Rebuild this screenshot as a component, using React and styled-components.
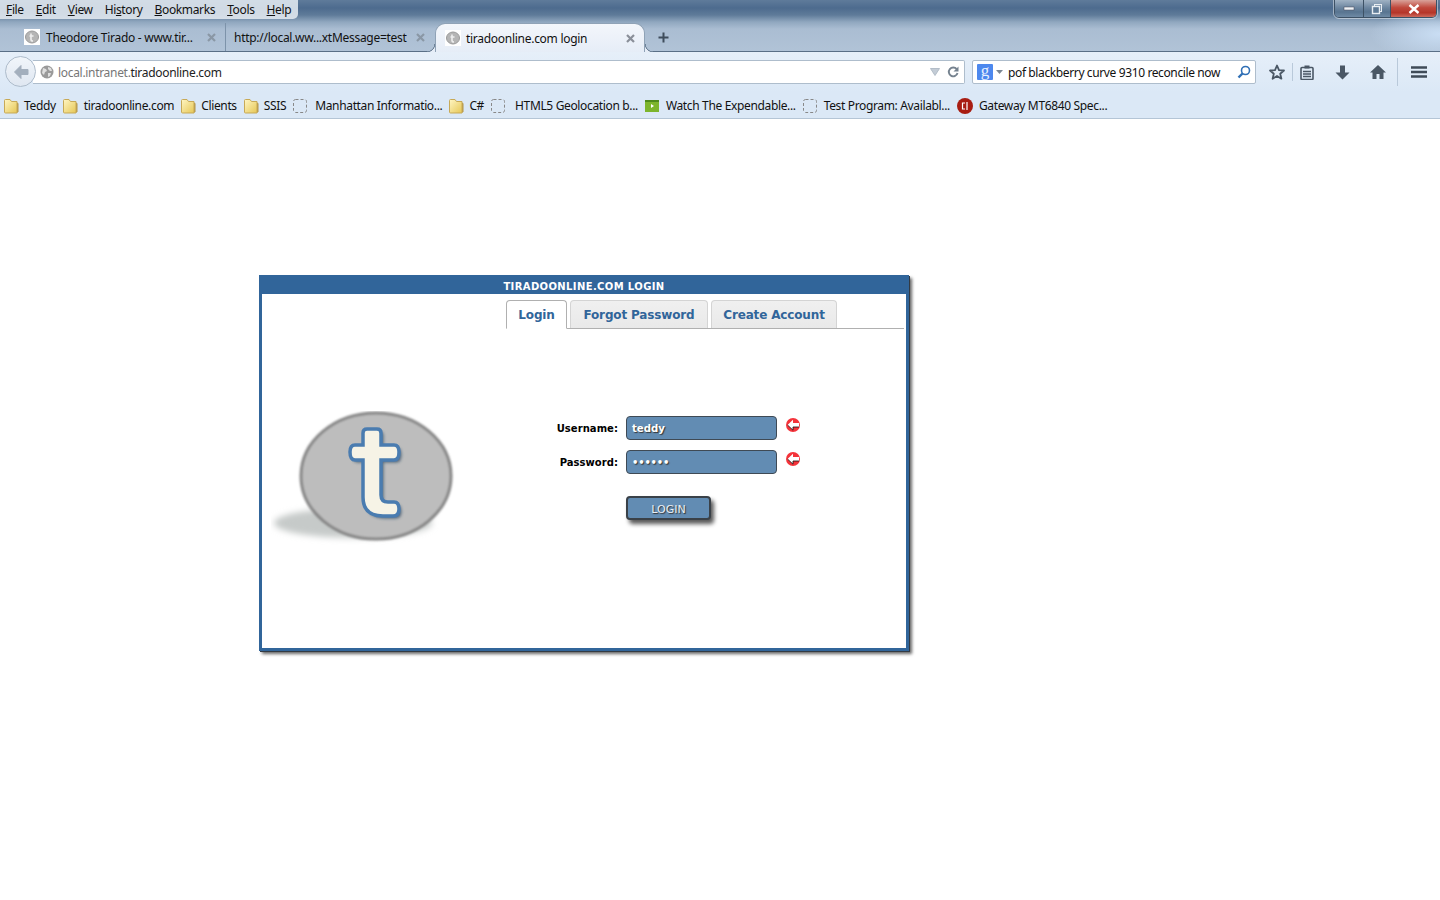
import React from "react";
import styled, { createGlobalStyle } from "styled-components";

const Global = createGlobalStyle`
  html, body { margin: 0; padding: 0; background: #fff; }
  body { font-family: "Noto Sans", "Liberation Sans", sans-serif; }
  * { box-sizing: border-box; }
`;

const Page = styled.div`
  width: 1440px;
  height: 900px;
  overflow: hidden;
  background: #fff;
`;

const Chrome = styled.header`
  height: 119px;
  border-bottom: 1px solid #b4c5d6;
  background: #dbe8f6;
  display: flex;
  flex-direction: column;
`;

const Frame = styled.div`
  height: 52px;
  display: flex;
  flex-direction: column;
  border-bottom: 1px solid #5a6f86;
  background:
    radial-gradient(ellipse 70px 26px at 100% 34px, rgba(205, 225, 247, 0.9), rgba(205, 225, 247, 0) 100%),
    linear-gradient(180deg, #5f7b9a 0, #4d6b8e 8px, #5f7b99 15px, #90a7bf 22px, #aabdd2 29px, #b1c3d7 52px);
`;

const TitleBar = styled.div`
  height: 24px;
  display: flex;
  align-items: flex-start;
  justify-content: space-between;
`;

const MenuBar = styled.nav`
  width: 298px;
  height: 19px;
  display: flex;
  gap: 12px;
  padding: 1px 0 0 6px;
  background: rgba(226, 233, 240, 0.88);
  border-bottom-right-radius: 5px;
`;

const MenuItem = styled.span`
  font-size: 12px;
  line-height: 17px;
  letter-spacing: -0.36px;
  color: #111;
  u { text-underline-offset: 1px; }
`;

const WindowButtons = styled.div`
  display: flex;
  height: 18px;
  margin-right: 3px;
  border: 1px solid #3d5165;
  border-top: 0;
  outline: 1px solid rgba(255,255,255,.45);
  border-radius: 0 0 5px 5px;
  overflow: hidden;
`;

const WinBtn = styled.div`
  width: ${p => p.$w}px;
  display: flex;
  align-items: center;
  justify-content: center;
  border-left: ${p => (p.$first ? 0 : "1px solid #3d5165")};
  background: ${p =>
    p.$close
      ? "linear-gradient(180deg, #d9a29a 0, #c0483c 45%, #b53529 75%, #cc6a5c 100%)"
      : "linear-gradient(180deg, #a0b2c4 0, #6d86a0 45%, #587490 70%, #6f8aa5 100%)"};
`;

const TabStrip = styled.div`
  height: 28px;
  display: flex;
  align-items: stretch;
  padding-left: 19px;
`;

const Tab = styled.div`
  width: ${p => p.$w}px;
  display: flex;
  align-items: center;
  padding-left: ${p => p.$pad}px;
  position: relative;
  font-size: 12px;
  letter-spacing: -0.28px;
  color: #111;
  white-space: nowrap;
  border-right: ${p => (p.$sep ? "1px solid #7d93aa" : "0")};
`;

const ActiveTab = styled(Tab)`
  height: 29px;
  background: linear-gradient(180deg, #f3f6fb 0, #e6edf7 100%);
  border: 1px solid #8fa2b6;
  border-bottom: 0;
  border-radius: 10px 10px 0 0;
  margin: 0 0 0 1px;
  z-index: 1;
  &::before, &::after {
    content: "";
    position: absolute;
    bottom: 0;
    width: 8px;
    height: 8px;
  }
  &::before { left: -9px; background: radial-gradient(circle at 0 0, transparent 7px, #6f8399 7.5px, #6f8399 8px, #e6edf7 8.5px); }
  &::after { right: -9px; background: radial-gradient(circle at 100% 0, transparent 7px, #6f8399 7.5px, #6f8399 8px, #e6edf7 8.5px); }
`;

const TabLabel = styled.span`
  margin-left: ${p => p.$ml}px;
  flex: 1;
`;

const TabClose = styled.span`
  width: 16px;
  margin-right: 6px;
  display: flex;
  align-items: center;
  justify-content: center;
`;

const NewTab = styled.div`
  width: 20px;
  margin-left: 8px;
  display: flex;
  align-items: center;
  justify-content: center;
`;

const NavBar = styled.div`
  height: 40px;
  display: flex;
  align-items: flex-start;
  padding: 8px 0 0 5px;
  background: linear-gradient(180deg, #e6eff9 0, #dbe8f6 100%);
`;

const BackCircle = styled.div`
  width: 31px;
  height: 31px;
  margin-top: -4px;
  border-radius: 50%;
  border: 1px solid #aebccb;
  background: linear-gradient(180deg, #f1f5fa, #dfe7f1);
  display: flex;
  align-items: center;
  justify-content: center;
  position: relative;
  z-index: 1;
`;

const UrlBox = styled.div`
  width: 932px;
  height: 24px;
  margin-left: -3px;
  background: #fff;
  border: 1px solid #aebdcc;
  border-left: 0;
  border-radius: 0 2px 2px 0;
  display: flex;
  align-items: center;
  padding: 0 5px 0 7px;
`;

const UrlText = styled.span`
  margin-left: 4px;
  flex: 1;
  font-size: 12px;
  letter-spacing: -0.31px;
  color: #777;
  b { font-weight: 400; color: #222; }
`;

const SearchBox = styled.div`
  width: 284px;
  height: 24px;
  margin-left: 7px;
  background: #fff;
  border: 1px solid #aebdcc;
  border-radius: 2px;
  display: flex;
  align-items: center;
  padding: 0 4px;
`;

const SearchText = styled.span`
  flex: 1;
  margin-left: 5px;
  font-size: 12px;
  letter-spacing: -0.38px;
  color: #111;
  white-space: nowrap;
`;

const GoogleMark = styled.span`
  width: 16px;
  height: 16px;
  background: #4d88ee;
  color: #e8f0ff;
  border-radius: 1px;
  font: 400 17px/13px "Liberation Serif", serif;
  text-align: center;
`;

const ToolIcons = styled.div`
  display: flex;
  align-items: center;
  height: 24px;
`;

const ToolIcon = styled.div`
  width: ${p => p.$w}px;
  padding-left: ${p => p.$pl || 0}px;
  display: flex;
  align-items: center;
  justify-content: center;
`;

const ToolSep = styled.div`
  width: 1px;
  height: ${p => p.$h}px;
  background: #b9c9da;
`;

const BookmarksBar = styled.div`
  flex: 1;
  display: flex;
  align-items: center;
  gap: 7px;
  padding: 1px 0 0 4px;
  background: #dbe8f6;
`;

const Bookmark = styled.div`
  display: flex;
  align-items: center;
  gap: ${p => p.$gap}px;
  font-size: 12px;
  letter-spacing: -0.35px;
  color: #111;
  white-space: nowrap;
`;

const Stage = styled.main`
  padding: 156px 0 0 259px;
`;

const Dialog = styled.section`
  width: 650px;
  height: 376px;
  background: #fff;
  border: 3px solid #31659a;
  border-top: 0;
  box-shadow: 1px 1px 0 #333b44, 3px 3px 3px rgba(0, 0, 0, 0.6);
  display: flex;
  flex-direction: column;
`;

const DialogTitle = styled.h1`
  margin: 0 -3px;
  height: 19px;
  background: #31659a;
  color: #fff;
  font: 700 10px/23px "DejaVu Sans", sans-serif;
  text-align: center;
  letter-spacing: 0.38px;
`;

const DialogBody = styled.div`
  flex: 1;
`;

const TabRow = styled.div`
  margin: 6px 2px 0 244px;
  height: 29px;
  border-bottom: 1px solid #b0b0b0;
  display: flex;
  gap: 3px;
  align-items: flex-end;
`;

const DialogTab = styled.div`
  height: ${p => (p.$active ? 29 : 28)}px;
  width: ${p => p.$w}px;
  margin-bottom: ${p => (p.$active ? -1 : 0)}px;
  border: 1px solid ${p => (p.$active ? "#b0b0b0" : "#d4d4d4")};
  border-bottom: ${p => (p.$active ? "1px solid #fff" : "0")};
  border-radius: 4px 4px 0 0;
  background: ${p => (p.$active ? "#fff" : "linear-gradient(180deg, #f0f0f0, #e9e9e9)")};
  color: #31659a;
  font: 700 12px/${p => (p.$active ? 29 : 29)}px "DejaVu Sans", sans-serif;
  letter-spacing: -0.15px;
  text-align: center;
`;

const Content = styled.div`
  display: flex;
  align-items: flex-start;
  padding: 82px 0 0 9px;
`;

const Logo = styled.svg`
  flex: none;
  display: block;
`;

const Form = styled.form`
  margin: 5px 0 0 0;
  display: grid;
  grid-template-columns: 163px 151px auto;
  grid-auto-rows: 24px;
  column-gap: 8px;
  row-gap: 10px;
  align-items: center;
`;

const FieldLabel = styled.label`
  font: 700 10px/25px "DejaVu Sans", sans-serif;
  color: #000;
  text-align: right;
  letter-spacing: 0.05px;
`;

const FieldInput = styled.div`
  height: 24px;
  background: #628cb3;
  border: 1px solid #3f4a55;
  border-radius: 4px;
  padding-left: 5px;
  color: #fff;
  font: 700 ${p => (p.$dots ? 10 : 10.2)}px/${p => (p.$dots ? 24 : 23)}px "DejaVu Sans", sans-serif;
  letter-spacing: ${p => (p.$dots ? -0.2 : 0)}px;
  text-shadow: 1px 1px 1px #333;
`;

const LoginButton = styled.button`
  grid-column: 2;
  align-self: start;
  margin-top: 12px;
  width: 85px;
  height: 24px;
  background: #628cb3;
  border: 2px solid #3a4148;
  border-radius: 4px;
  box-shadow: 3px 4px 4px rgba(0,0,0,.65);
  color: #e9eff5;
  font: 400 11px/23px "DejaVu Sans", sans-serif;
  text-shadow: 1px 1px 1px #333;
  padding: 0;
`;

const Favicon = () => (
  <svg width="16" height="16" viewBox="0 0 16 16">
    <rect width="16" height="16" fill="#fff" />
    <ellipse cx="8" cy="8" rx="6.5" ry="6" fill="#b5b5b5" stroke="#999" />
    <path d="M7 4.500v6q0 1.500 2 1.500M5.500 7h4" stroke="#eee" strokeWidth="1.600" fill="none" />
  </svg>
);

const CloseX = ({ c = "#8a97a5" }) => (
  <svg width="9" height="9" viewBox="0 0 9 9">
    <path d="M1 1l7 7M8 1l-7 7" stroke={c} strokeWidth="2.200" />
  </svg>
);

const Folder = () => (
  <svg width="15" height="16" viewBox="0 0 15 16">
    <defs>
      <linearGradient id="fld" x1="0" y1="0" x2="1" y2="1">
        <stop offset="0" stopColor="#fff6c4" />
        <stop offset="1" stopColor="#e6c755" />
      </linearGradient>
    </defs>
    <path d="M13 4.500l1.500 1v8l-1.500 1.500z" fill="#b2954b" />
    <path d="M.5 2.500q0-1 1-1h4.500l1.500 2h5.500v11.500H1.500q-1 0-1-1z" fill="url(#fld)" stroke="#c7a957" />
  </svg>
);

const Blank = () => (
  <svg width="14" height="14" viewBox="0 0 14 14">
    <rect x="0.5" y="0.5" width="13" height="13" rx="2" fill="none" stroke="#888" strokeDasharray="3 2" />
  </svg>
);

const Arrow = ({ className }) => (
  <svg className={className} width="16" height="16" viewBox="0 0 16 16">
    <circle cx="8" cy="8" r="7" fill="#f4333a" />
    <path d="M2.500 8l5.500-5.200v3.200h6v4H8v3.200z" fill="#fff" />
    <path d="M2.500 8l5.500 5.200V10h6" fill="none" stroke="#111" strokeWidth=".8" />
  </svg>
);

const ErrorMark = styled(Arrow)`
  display: block;
  align-self: start;
  margin-top: 1px;
`;

const BookmarkList = [
  ["folder", "Teddy", 5],
  ["folder", "tiradoonline.com", 6],
  ["folder", "Clients", 5],
  ["folder", "SSIS", 5],
  ["blank", "Manhattan Informatio...", 8],
  ["folder", "C#", 5],
  ["blank", "HTML5 Geolocation b...", 10],
  ["film", "Watch The Expendable...", 7],
  ["blank", "Test Program: Availabl...", 7],
  ["red", "Gateway MT6840 Spec...", 6],
];

const BookmarkIcon = ({ kind }) => {
  if (kind === "folder") return <Folder />;
  if (kind === "blank") return <Blank />;
  if (kind === "film")
    return (
      <svg width="14" height="12" viewBox="0 0 14 12">
        <rect width="14" height="12" fill="#7db52c" />
        <rect width="14" height="2" fill="#4f8a1a" />
        <path d="M6 4l3 2-3 2z" fill="#fff" />
      </svg>
    );
  return (
    <svg width="16" height="16" viewBox="0 0 16 16">
      <circle cx="8" cy="8" r="8" fill="#a81d12" />
      <path d="M8 5H5.500v6H8M10 4v8" stroke="#fff" strokeWidth="1.200" fill="none" />
    </svg>
  );
};

const tShape =
  "M96 18H106Q110 18 110 22V34H123Q128 34 128 41Q128 49 123 49H110V84Q110 91 117 91H123Q128 91 128 98Q128 105 122 105H112Q92 105 92 86V49H84Q79 49 79 41Q79 34 84 34H92V22Q92 18 96 18Z";

const LogoArt = () => (
  <Logo width="184" height="134" viewBox="0 0 184 134">
    <defs>
      <filter id="soft" x="-20%" y="-50%" width="140%" height="200%">
        <feGaussianBlur stdDeviation="3" />
      </filter>
      <filter id="tshadow" x="-30%" y="-30%" width="160%" height="160%">
        <feGaussianBlur stdDeviation="1.500" />
      </filter>
      <filter id="edge" x="-5%" y="-5%" width="110%" height="110%">
        <feGaussianBlur stdDeviation="0.800" />
      </filter>
    </defs>
    <ellipse cx="82" cy="112" rx="79" ry="15" fill="#c6cac9" filter="url(#soft)" />
    <ellipse cx="105" cy="65" rx="75" ry="63" fill="#bdbdbd" stroke="#858585" strokeWidth="3" filter="url(#edge)" />
    <path d={tShape} fill="#27425f" transform="translate(2.500 2.500)" filter="url(#tshadow)" opacity=".7" />
    <path d={tShape} fill="#f6f3e6" stroke="#4a7cb0" strokeWidth="3.500" />
  </Logo>
);

export default function App() {
  return (
    <Page>
      <Global />
      <Chrome>
        <Frame>
          <TitleBar>
            <MenuBar>
              <MenuItem><u>F</u>ile</MenuItem>
              <MenuItem><u>E</u>dit</MenuItem>
              <MenuItem><u>V</u>iew</MenuItem>
              <MenuItem>Hi<u>s</u>tory</MenuItem>
              <MenuItem><u>B</u>ookmarks</MenuItem>
              <MenuItem><u>T</u>ools</MenuItem>
              <MenuItem><u>H</u>elp</MenuItem>
            </MenuBar>
            <WindowButtons>
              <WinBtn $w={28} $first>
                <svg width="12" height="6" viewBox="0 0 12 6"><rect x="1" y="1" width="10" height="3" fill="#eef2f6" stroke="#445" strokeWidth=".5" /></svg>
              </WinBtn>
              <WinBtn $w={27}>
                <svg width="12" height="12" viewBox="0 0 12 12"><rect x="3.500" y="1.500" width="7" height="7" fill="none" stroke="#e8edf2" /><rect x="1.500" y="3.500" width="7" height="7" fill="#5f7b97" stroke="#e8edf2" strokeWidth="1.400" /></svg>
              </WinBtn>
              <WinBtn $w={46} $close>
                <svg width="12" height="10" viewBox="0 0 12 10"><path d="M1.500 1l9 8M10.500 1l-9 8" stroke="#fff" strokeWidth="2.400" /></svg>
              </WinBtn>
            </WindowButtons>
          </TitleBar>
          <TabStrip>
            <Tab $w={207} $pad={5} $sep>
              <Favicon />
              <TabLabel $ml={6}>Theodore Tirado - www.tir...</TabLabel>
              <TabClose><CloseX /></TabClose>
            </Tab>
            <Tab $w={208} $pad={0}>
              <TabLabel $ml={8}>http://local.ww...xtMessage=test</TabLabel>
              <TabClose><CloseX /></TabClose>
            </Tab>
            <ActiveTab $w={210} $pad={9}>
              <Favicon />
              <TabLabel $ml={5}>tiradoonline.com login</TabLabel>
              <TabClose><CloseX c="#8a8f99" /></TabClose>
            </ActiveTab>
            <NewTab>
              <svg width="11" height="11" viewBox="0 0 11 11"><path d="M5.500 0.500v10M0.500 5.500h10" stroke="#3f4d5c" strokeWidth="2" /></svg>
            </NewTab>
          </TabStrip>
        </Frame>
        <NavBar>
          <BackCircle>
            <svg width="18" height="16" viewBox="0 0 18 16"><path d="M9 1.500L2.500 8 9 14.500V10.500h7v-5H9z" fill="#a3afbd" stroke="#a3afbd" strokeLinejoin="round" /></svg>
          </BackCircle>
          <UrlBox>
            <svg width="14" height="14" viewBox="0 0 14 14"><circle cx="7" cy="7" r="6.500" fill="#9a9a9a" /><path d="M3 3l3 1 1 2-2 1-1 3-2-2zM8 2l3 1 1 3-2 0-2-2zM8 8l3 0-1 3-2 1z" fill="#dfdfdf" /></svg>
            <UrlText>local.intranet.<b>tiradoonline.com</b></UrlText>
            <svg width="10" height="8" viewBox="0 0 10 8"><path d="M.5.500h9L5 7.500z" fill="#c3ccd6" stroke="#b3bdc8" /></svg>
            <svg width="12" height="12" viewBox="0 0 12 12" style={{ marginLeft: 7 }}><path d="M9.700 3.200A4.400 4.400 0 1 0 10.500 7" fill="none" stroke="#75828f" strokeWidth="1.900" /><path d="M11.500.500v5H6.500z" fill="#75828f" /></svg>
          </UrlBox>
          <SearchBox>
            <GoogleMark>g</GoogleMark>
            <svg width="7" height="5" viewBox="0 0 7 5" style={{ marginLeft: 3 }}><path d="M0 0h7L3.500 4z" fill="#7a8794" /></svg>
            <SearchText>pof blackberry curve 9310 reconcile now</SearchText>
            <svg width="14" height="14" viewBox="0 0 14 14"><circle cx="8.500" cy="5.500" r="4" fill="none" stroke="#2f6fb5" strokeWidth="1.600" /><path d="M5.500 8.500L1.500 12.500" stroke="#2f6fb5" strokeWidth="2.400" /></svg>
          </SearchBox>
          <ToolIcons>
            <ToolIcon $w={36} $pl={6}>
              <svg width="16" height="16" viewBox="0 0 16 16"><path d="M8 1.500l2 4.600 5 .4-3.800 3.300 1.200 4.900L8 12l-4.400 2.700 1.200-4.900L1 6.500l5-.4z" fill="none" stroke="#4a5765" strokeWidth="1.800" strokeLinejoin="round" /></svg>
            </ToolIcon>
            <ToolSep $h={18} />
            <ToolIcon $w={28}>
              <svg width="14" height="15" viewBox="0 0 14 15"><rect x="1" y="2.500" width="12" height="12" rx="1" fill="none" stroke="#4a5765" strokeWidth="1.600" /><rect x="4.500" y="0.500" width="5" height="3" fill="#4a5765" /><path d="M3 6.500h8M3 9h8M3 11.500h8" stroke="#4a5765" strokeWidth="1.300" /></svg>
            </ToolIcon>
            <ToolIcon $w={42}>
              <svg width="15" height="15" viewBox="0 0 15 15"><path d="M5 .5h5v7h4.500l-7 7-7-7H5z" fill="#4a5765" /></svg>
            </ToolIcon>
            <ToolIcon $w={30}>
              <svg width="16" height="14" viewBox="0 0 16 14"><path d="M8 0L0 7.500h2.500V14H6.500V9h3v5h4V7.500H16z" fill="#4a5765" /></svg>
            </ToolIcon>
            <ToolIcon $w={4} />
            <ToolSep $h={28} />
            <ToolIcon $w={42}>
              <svg width="16" height="12" viewBox="0 0 16 12"><path d="M0 1.500h16M0 6h16M0 10.500h16" stroke="#3f4b58" strokeWidth="2.600" /></svg>
            </ToolIcon>
          </ToolIcons>
        </NavBar>
        <BookmarksBar>
          {BookmarkList.map(([kind, label, gap]) => (
            <Bookmark key={label} $gap={gap}>
              <BookmarkIcon kind={kind} />
              {label}
            </Bookmark>
          ))}
        </BookmarksBar>
      </Chrome>
      <Stage>
        <Dialog>
          <DialogTitle>TIRADOONLINE.COM LOGIN</DialogTitle>
          <DialogBody>
            <TabRow>
              <DialogTab $active $w={61}>Login</DialogTab>
              <DialogTab $w={138}>Forgot Password</DialogTab>
              <DialogTab $w={126}>Create Account</DialogTab>
            </TabRow>
            <Content>
              <LogoArt />
              <Form>
                <FieldLabel>Username:</FieldLabel>
                <FieldInput>teddy</FieldInput>
                <ErrorMark />
                <FieldLabel>Password:</FieldLabel>
                <FieldInput $dots>••••••</FieldInput>
                <ErrorMark />
                <LoginButton type="button">LOGIN</LoginButton>
              </Form>
            </Content>
          </DialogBody>
        </Dialog>
      </Stage>
    </Page>
  );
}
